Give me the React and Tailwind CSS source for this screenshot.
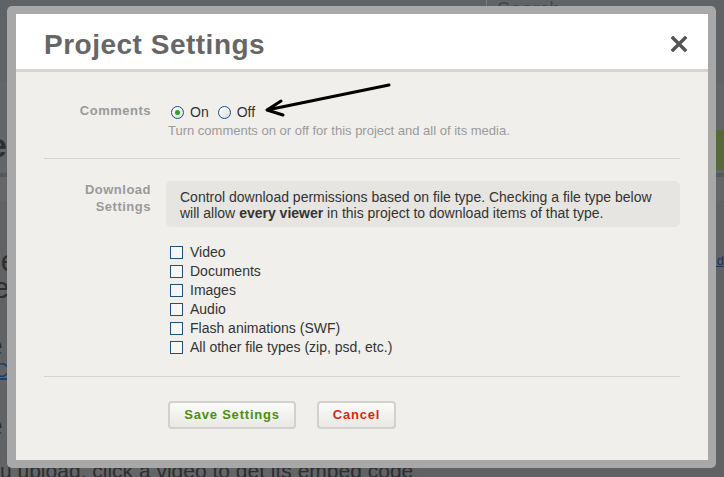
import React from 'react';

const fileTypes = [
    'Video',
    'Documents',
    'Images',
    'Audio',
    'Flash animations (SWF)',
    'All other file types (zip, psd, etc.)',
];

const Radio = ({ checked, label }) => (
    <label className="flex items-center">
        <span className="w-[13px] h-[13px] rounded-full border border-[#1d4f80] bg-gradient-to-br from-white to-[#dcdcdc] flex items-center justify-center shrink-0">
            {checked && <span className="w-[5px] h-[5px] rounded-full bg-[#2ba12b]" />}
        </span>
        <span className="ml-[6px] text-[14px] leading-[17px] text-[#333]">{label}</span>
    </label>
);

const Checkbox = ({ label }) => (
    <label className="flex items-center h-[19px] pl-[4px]">
        <span className="w-[13px] h-[13px] border border-[#1d4f80] bg-[#f7f7f5] shrink-0" />
        <span className="ml-[7px] text-[14px] leading-[17px] text-[#333]">{label}</span>
    </label>
);

const Label = ({ children }) => (
    <div className="text-right text-[13px] leading-[17px] font-bold tracking-[0.5px] text-[#9a9a9a]">
        {children}
    </div>
);

const App = () => {
    return (
        <div className="relative w-[724px] h-[477px] overflow-hidden bg-[#5f6163] font-['Liberation_Sans',Arial,sans-serif]">
            {/* dimmed page behind the dialog */}
            <div className="flex flex-col h-full">
                <div className="h-[82px] bg-[#5f6366] flex justify-end">
                    <div className="w-[238px] h-[20px] border-l border-[#7a7d80] pl-[10px] -mt-[6px] text-[20px] text-[#44474a]">Search</div>
                </div>
                <div className="h-[91px] bg-[#636668] flex justify-between">
                    <span className="mt-[46px] text-[34px] leading-[34px] font-bold text-[#2c2e30] -ml-[12px]">e</span>
                    <span className="w-[14px] h-[40px] bg-[#56683a] mt-[48px]" />
                </div>
                <div className="h-[4px] bg-[#56585a]" />
                <div className="h-[24px] bg-[#646668]" />
                <div className="flex-1 bg-[#606264] flex flex-col">
                    <div className="h-[46px]" />
                    <div className="flex justify-between text-[30px] leading-[28px] text-[#2c2e30]">
                        <span className="-ml-[16px]">ne</span>
                        <span className="text-[13px] text-[#22305a] underline">.d</span>
                    </div>
                    <div className="text-[30px] leading-[26px] text-[#2c2e30] -ml-[14px]">le</div>
                    <div className="h-[30px]" />
                    <div className="text-[30px] leading-[30px] text-[#2c2e30] -ml-[14px]">e</div>
                    <div className="text-[20px] leading-[18px] text-[#1c3f70] underline -ml-[6px]">C</div>
                    <div className="h-[32px]" />
                    <div className="text-[30px] leading-[30px] text-[#2c2e30] -ml-[14px]">e</div>
                    <div className="mt-auto h-[14px] flex">
                        <div className="h-full bg-gradient-to-r from-[#636566] from-[78%] to-[#5f6163] to-[78%] text-[21px] leading-[16px] text-[#2c2e30] whitespace-nowrap pr-[8px]">
                            u upload. click a video to get its embed code
                        </div>
                    </div>
                </div>
            </div>

            {/* dialog */}
            <div className="absolute left-[7px] top-[6px] w-[709px] h-[462px] rounded-[5px] bg-[#a8a8a8] pl-[9px] pr-[8px] pt-[8px] pb-[8px]">
                <div className="flex flex-col h-full">
                    <div className="h-[55px] bg-white flex items-start justify-between pl-[28px] pr-[21px]">
                        <h1 className="mt-[17px] text-[28px] leading-[28px] font-bold tracking-[0.5px] text-[#666]">Project Settings</h1>
                        <svg className="mt-[22px]" width="16" height="16" viewBox="0 0 16 16">
                            <path d="M2 2 L14 14 M14 2 L2 14" stroke="#555" strokeWidth="3.4" strokeLinecap="square" />
                        </svg>
                    </div>
                    <div className="h-[3px] bg-[#d8d5d0]" />
                    <div className="flex-1 bg-[#f0efeb] px-[28px]">
                        {/* comments */}
                        <div className="grid grid-cols-[107px_1fr] gap-x-[15px] pt-[32px] pb-[19px] border-b border-[#d6d4d0]">
                            <div className="-mt-[2px]">
                                <Label>Comments</Label>
                            </div>
                            <div>
                                <div className="flex items-center gap-[9px] pl-[5px] h-[17px]">
                                    <Radio checked label="On" />
                                    <Radio label="Off" />
                                </div>
                                <p className="mt-[1px] pl-[2px] text-[13px] leading-[17px] text-[#9a9a9a]">
                                    Turn comments on or off for this project and all of its media.
                                </p>
                            </div>
                        </div>

                        {/* downloads */}
                        <div className="grid grid-cols-[107px_1fr] gap-x-[15px] pt-[22px] pb-[19px] border-b border-[#d6d4d0]">
                            <div>
                                <Label>
                                    Download
                                    <br />
                                    Settings
                                </Label>
                            </div>
                            <div>
                                <div className="rounded-[5px] bg-[#e6e5e1] px-[14px] pt-[8px] pb-[6px] text-[14px] leading-[16px] text-[#333]">
                                    Control download permissions based on file type. Checking a file type below will allow{' '}
                                    <b>every viewer</b> in this project to download items of that type.
                                </div>
                                <div className="mt-[16px] flex flex-col">
                                    {fileTypes.map((t) => (
                                        <Checkbox key={t} label={t} />
                                    ))}
                                </div>
                            </div>
                        </div>

                        {/* actions */}
                        <div className="grid grid-cols-[107px_1fr] gap-x-[15px] pt-[24px]">
                            <div />
                            <div className="flex gap-[21px] pl-[2px]">
                                <button className="w-[128px] h-[28px] rounded-[4px] border-2 border-[#d3d1cd] bg-gradient-to-b from-[#fbfbfa] to-[#e9e8e4] text-[13px] font-bold tracking-[0.8px] text-[#4b8f13]">
                                    Save Settings
                                </button>
                                <button className="w-[79px] h-[28px] rounded-[4px] border-2 border-[#d3d1cd] bg-gradient-to-b from-[#fbfbfa] to-[#e9e8e4] text-[13px] font-bold tracking-[0.8px] text-[#d42a10]">
                                    Cancel
                                </button>
                            </div>
                        </div>
                    </div>
                </div>
            </div>

            {/* hand-drawn arrow pointing at the Off option */}
            <svg className="absolute left-[260px] top-[78px]" width="140" height="40" viewBox="0 0 140 40">
                <path d="M129 7 L7 32 M7 32 L21 23 M7 32 L23 37" stroke="#000" strokeWidth="3" strokeLinecap="round" fill="none" />
            </svg>
        </div>
    );
};

export default App;
